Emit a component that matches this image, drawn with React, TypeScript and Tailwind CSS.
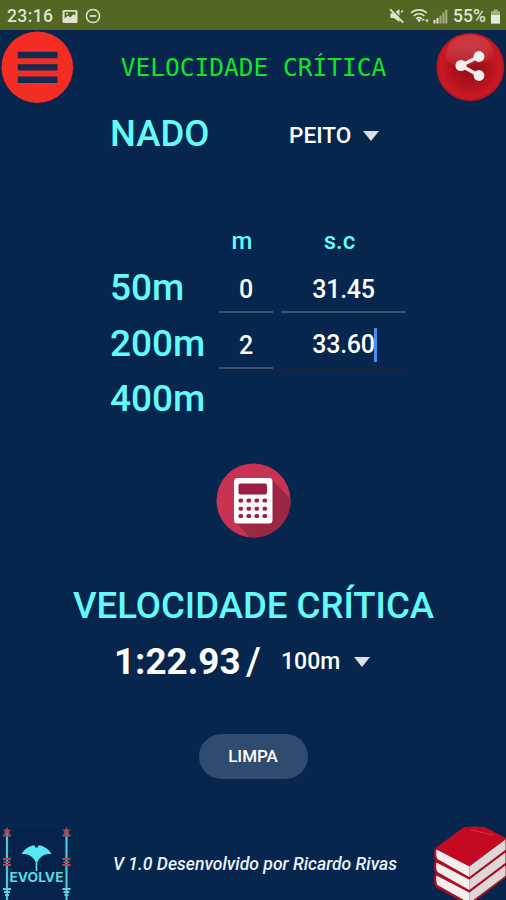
import { useState } from "react";

type Entry = {
  label: string;
  minutes?: string;
  seconds?: string;
  focused?: boolean;
};

const ENTRIES: Entry[] = [
  { label: "50m", minutes: "0", seconds: "31.45" },
  { label: "200m", minutes: "2", seconds: "33.60", focused: true },
  { label: "400m" },
];

function StatusBar() {
  return (
    <div className="flex h-[30px] items-center bg-[#546624] pl-[7px] pr-[5px] pt-[2px] text-[17.5px] font-medium text-[#dfe4cf]">
      <span className="w-[55px] tracking-[0.4px]">23:16</span>
      <svg className="h-[15px] w-[16px]" viewBox="0 0 16 15">
        <rect x="0.5" y="1" width="15" height="13" rx="1.5" fill="#dfe4cf" />
        <path d="M2.6 2.8h10.8v4l-1.8-1.7-3.2 3.3L6 6.6 2.6 9.6z" fill="#546624" />
        <circle cx="5" cy="4.8" r="1" fill="#dfe4cf" />
      </svg>
      <svg className="ml-[7px] h-[16px] w-[16px]" viewBox="0 0 16 16" fill="none" stroke="#dfe4cf">
        <circle cx="8" cy="8" r="6.6" strokeWidth="1.5" />
        <path d="M4.7 8h6.6" strokeWidth="1.8" />
      </svg>
      <div className="ml-auto flex items-center">
        <svg className="h-[16px] w-[16px]" viewBox="0 0 16 16" fill="#dfe4cf">
          <path d="M1.5 5.3h3.2L10.5 1v13L4.7 10H1.5z" />
          <path d="M2 .2 15.500 13.700" stroke="#546624" strokeWidth="1.5" />
          <path d="M1.2 1.4 14.2 14.6" stroke="#dfe4cf" strokeWidth="1.9" />
          <path d="m12 4.5 2-2" stroke="#dfe4cf" strokeWidth="1.2" />
        </svg>
        <svg className="ml-[5px] h-[16px] w-[20px]" viewBox="0 0 20 16" fill="none" stroke="#dfe4cf" strokeWidth="1.6">
          <path d="M1 5c4.5-4.2 11.5-4.2 16 0M3.6 8c3.2-2.9 7.6-2.9 10.8 0M6.2 10.9c1.7-1.5 3.9-1.5 5.6 0" />
          <path d="m7 12 2-1.3 2 1.3-2 2.3z" fill="#dfe4cf" stroke="none" />
          <path d="m11.5 12.6 1.7-2.4 1.7 2.4zM15.2 11.5h3.6L17 14.8z" fill="#dfe4cf" stroke="none" />
        </svg>
        <svg className="ml-[3px] h-[15px] w-[15px]" viewBox="0 0 15 15">
          <path d="M.5 11h2v3.5h-2zM3.5 9h2v5.5h-2z" fill="#dfe4cf" />
          <path d="M6.5 6.5h2v8h-2zM9.5 3.500h2v11h-2zM12.3.8h2v13.7h-2z" fill="#a5ae86" />
        </svg>
        <span className="ml-[5px] w-[35px] whitespace-nowrap">55%</span>
        <svg className="ml-[2px] h-[15px] w-[11px]" viewBox="0 0 11 15">
          <path d="M3.5.5h4v1.8H10v12.2H1V2.3h2.500z" fill="#a5ae86" />
          <path d="M1 6h9v8.5H1z" fill="#e6eadb" />
        </svg>
      </div>
    </div>
  );
}

function MenuIcon() {
  return (
    <svg className="h-[74px] w-[74px]" viewBox="0 0 74 74">
      <circle cx="37.3" cy="37.3" r="35.8" fill="#f32d24" />
      <path d="M17.8 21.8h39.7v6.4H17.8zM17.8 34.2h39.7v6.4H17.8zM17.8 46.6h39.7V53H17.8z" fill="#142a50" />
    </svg>
  );
}

function ShareIcon() {
  return (
    <svg className="h-[70px] w-[70px]" viewBox="0 0 70 70">
      <defs>
        <radialGradient id="ball" cx="50%" cy="50%" r="50%">
          <stop offset="0" stopColor="#960c15" />
          <stop offset=".5" stopColor="#ac121b" />
          <stop offset=".9" stopColor="#cc1a24" />
          <stop offset="1" stopColor="#b0121d" />
        </radialGradient>
        <radialGradient id="gloss" cx="45%" cy="40%" r="62%">
          <stop offset="0" stopColor="#d4505a" stopOpacity=".65" />
          <stop offset=".7" stopColor="#d4505a" stopOpacity=".45" />
          <stop offset="1" stopColor="#d4505a" stopOpacity=".15" />
        </radialGradient>
      </defs>
      <circle cx="35.3" cy="35" r="34" fill="url(#ball)" />
      <path d="M11 23C12 9 22 2.500 35 2.500S58 9 58.500 22c0 6-3.500 9-8 9-9-2-21 5-31 2-5-1.500-8.800-4.500-8.500-10z" fill="url(#gloss)" />
      <path d="M44 24.5 26 33.5l18 10" fill="none" stroke="#f5eeee" strokeWidth="3.6" />
      <g fill="#f5eeee">
        <circle cx="44" cy="24.5" r="5.4" />
        <circle cx="26" cy="33.5" r="5.6" />
        <circle cx="44" cy="43.5" r="5.4" />
      </g>
    </svg>
  );
}

function Caret() {
  return (
    <svg className="h-[10px] w-[16px]" viewBox="0 0 16 10">
      <path d="M0 0h16L8 10z" fill="#dedfe2" />
    </svg>
  );
}

function CalculatorIcon() {
  return (
    <svg className="h-[75px] w-[75px]" viewBox="0 0 75 75">
      <clipPath id="disc">
        <circle cx="37.5" cy="37.5" r="37" />
      </clipPath>
      <g clipPath="url(#disc)">
        <path d="M0 0h75v75H0z" fill="#c83253" />
        <path d="M55 16 85 46v40H44L20 59z" fill="#9b2745" />
      </g>
      <rect x="18" y="15" width="38.5" height="45.5" rx="3.5" fill="#fff" />
      <rect x="22.5" y="20.5" width="28.5" height="11" rx="2" fill="#9c1c42" />
      <g fill="#a51c46">
        {[35.5, 43.7, 51].map((y) =>
          [22.5, 30.5, 38.5, 46.5].map((x) => (
            <rect height="4" key={`${x}-${y}`} rx="1.6" width="4.6" x={x} y={y} />
          ))
        )}
      </g>
    </svg>
  );
}

function EvolveLogo() {
  return (
    <svg className="h-[76px] w-[74px]" viewBox="0 0 74 76">
      <path d="M0 3h70v73H0z" fill="#06234b" />
      {[7, 66.5].map((x) => (
        <g key={x}>
          <path d={`M${x} 9v67`} stroke="#4fc4d8" strokeWidth="2.2" />
          <path d={`M${x} 3l1.200 2.500 3 .3-2 2 .8 3.200-3-1.500-3 1.500.8-3.200-2-2 3-.3z`} fill="#9d4d5d" />
          <path d={`M${x - 4} 11.500h8M${x - 4} 35h8M${x - 3} 38h6M${x - 4} 41h8`} stroke="#a94a54" strokeWidth="2" />
          <path d={`M${x - 4} 65h8M${x - 3} 68h6M${x - 2} 71h4`} stroke="#62cfe0" strokeWidth="2" />
        </g>
      ))}
      <path
        d="M21.5 30C25 24 30 22 34.3 21.2l1.200 2.200h2l1.200-2.200C43 22 48 24 51.500 30c-5-.5-8.500.5-12 4.500L37.300 38v9h-1.600v-9l-2.200-3.500c-3.500-4-7-5-12-4.500z"
        fill="#56e9f1"
      />
      <text
        fill="#57dbe6"
        fontFamily="Inter, sans-serif"
        fontSize="12.5"
        fontWeight="700"
        lengthAdjust="spacingAndGlyphs"
        textLength="54"
        x="9.5"
        y="58"
      >
        EVOLVE
      </text>
    </svg>
  );
}

function BooksIcon() {
  return (
    <svg className="h-[76px] w-[74px]" viewBox="0 0 74 76">
      {[26, 13, 0].map((dy) => (
        <g key={dy} transform={`translate(0 ${dy})`}>
          <path d="M3 24 37.300 40.500 74 13v14.500L37.300 55.500 3.500 37Q.5 30 3 24z" fill="#ae1022" />
          <path d="M4.500 25.500 37.300 42.500V53L5.500 35Q3.500 31 4.500 25.500z" fill="#f3efef" />
          <path d="M37.300 42.500 73.500 15.500v10.200L37.300 53z" fill="#dcd8da" />
        </g>
      ))}
      <path d="M3.500 24 32 3q11-1 21 0l21 11.300-36.700 27.400z" fill="#c40a22" />
      <path d="m39 6 22 5" stroke="#d64a58" strokeDasharray="2 1" strokeWidth="1" />
    </svg>
  );
}

function EntryRow({ entry, onChange }: { entry: Entry; onChange: (value: Entry) => void }) {
  return (
    <div className="flex h-[55.5px] items-start">
      <span className="w-[109px] text-[37px] font-medium leading-[55px] text-[#62fbf9]">{entry.label}</span>
      {entry.minutes !== undefined && (
        <>
          <input
            className="mt-[4px] h-[49px] w-[54px] border-b-2 border-[#40536e] bg-transparent pt-[4px] text-center text-[25px] font-medium text-white outline-none"
            onChange={(e) => onChange({ ...entry, minutes: e.target.value })}
            value={entry.minutes}
          />
          <div
            className={
              entry.focused
                ? "ml-[8px] mt-[4px] flex h-[49px] w-[125px] items-center justify-center border-b border-[#231f3c] pt-[3px]"
                : "ml-[8px] mt-[4px] flex h-[49px] w-[125px] items-center justify-center border-b-2 border-[#40536e] pt-[4px]"
            }
          >
            <span className="text-[25px] font-medium tracking-[-0.25px] text-white">{entry.seconds}</span>
            {entry.focused && <span className="-ml-px -mr-[2px] h-[34px] w-[3px] bg-[#4d8ff0]" />}
          </div>
        </>
      )}
    </div>
  );
}

export default function App() {
  const [entries, setEntries] = useState(ENTRIES);

  function update(index: number, value: Entry) {
    setEntries(entries.map((entry, i) => (i === index ? value : entry)));
  }

  return (
    <main className="flex h-[900px] w-[506px] flex-col overflow-hidden bg-[#06264e] font-['Roboto',sans-serif]">
      <StatusBar />

      <header className="flex h-[74px] items-center justify-between pr-[1px]">
        <button aria-label="Menu" type="button">
          <MenuIcon />
        </button>
        <h1 className="whitespace-nowrap pr-[2px] pt-[3px] font-['DejaVu_Sans_Mono',monospace] text-[24.5px] text-[#12e529]">
          VELOCIDADE CRÍTICA
        </h1>
        <button aria-label="Compartilhar" type="button">
          <ShareIcon />
        </button>
      </header>

      <section className="flex h-[58px] items-center pl-[110px]">
        <span className="w-[179px] pt-[2px] text-[36.5px] font-medium text-[#62fbf9]">NADO</span>
        <button className="flex items-center gap-[12px] pt-[6px] text-[22.6px] font-medium text-white" type="button">
          PEITO
          <Caret />
        </button>
      </section>

      <section className="pl-[110px] pt-[60px]">
        <div className="mb-[2px] flex h-[36px] items-center pl-[105px] pt-[1px] text-[24px] font-medium text-[#62fbf9]">
          <span className="w-[54px] text-center">m</span>
          <span className="ml-[8px] w-[125px] text-center">s.c</span>
        </div>
        {entries.map((entry, i) => (
          <EntryRow entry={entry} key={entry.label} onChange={(value) => update(i, value)} />
        ))}
      </section>

      <button aria-label="Calcular" className="mt-[36px] self-center" type="button">
        <CalculatorIcon />
      </button>

      <section className="mt-[41px]">
        <h2 className="whitespace-nowrap pl-[1px] text-center text-[36.6px] font-medium leading-[54px] text-[#62fbf9]">
          VELOCIDADE CRÍTICA
        </h2>
        <div className="flex h-[56px] items-center pl-[114px] pt-[3px] text-white">
          <span className="w-[132px] text-[36.8px] font-bold">1:22.93</span>
          <span className="w-[35px] text-[38px] font-medium">/</span>
          <button className="flex items-center gap-[14px] text-[23px] font-medium" type="button">
            100m
            <Caret />
          </button>
        </div>
      </section>

      <button
        className="mt-[45px] h-[45px] w-[109px] self-center rounded-full bg-[#304b70] pt-[2px] text-[17px] font-medium text-white"
        type="button"
      >
        LIMPA
      </button>

      <footer className="mt-auto flex h-[76px] items-center justify-between">
        <EvolveLogo />
        <span className="whitespace-nowrap pl-[4px] pt-[4px] text-[17.6px] font-medium italic text-[#e8f3fb]">
          V 1.0 Desenvolvido por Ricardo Rivas
        </span>
        <BooksIcon />
      </footer>
    </main>
  );
}
